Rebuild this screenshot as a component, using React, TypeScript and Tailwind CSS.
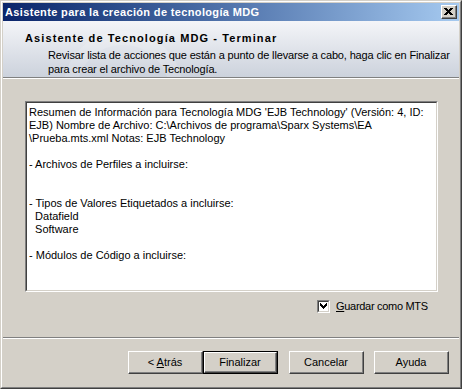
import React from "react";

const font = { fontFamily: '"Liberation Sans", Arial, sans-serif' };

function Btn({ label, def, ul }: { label: string; def?: boolean; ul?: string }) {
  const inner = (
    <div className="w-full h-full border-t border-l border-t-white border-l-white border-r border-b border-r-[#404040] border-b-[#404040]">
      <div className="w-full h-full border-r border-b border-r-[#808080] border-b-[#808080] flex items-center justify-center text-[11px] text-black">
        {ul ? (
          <span>
            {label.split(ul)[0]}
            <span className="underline">{ul}</span>
            {label.split(ul)[1]}
          </span>
        ) : (
          label
        )}
      </div>
    </div>
  );
  return def ? (
    <div className="w-[75px] h-[23px] border border-black bg-[#d4d0c8]">{inner}</div>
  ) : (
    <div className="w-[75px] h-[23px] bg-[#d4d0c8]">{inner}</div>
  );
}

export default function App() {
  const lines = [
    "Resumen de Información para Tecnología MDG 'EJB Technology' (Versión: 4, ID:",
    "EJB) Nombre de Archivo: C:\\Archivos de programa\\Sparx Systems\\EA",
    "\\Prueba.mts.xml Notas: EJB Technology",
    "",
    "- Archivos de Perfiles a incluirse:",
    "",
    "",
    "- Tipos de Valores Etiquetados a incluirse:",
    "  Datafield",
    "  Software",
    "",
    "- Módulos de Código a incluirse:",
  ];
  return (
    <div style={font} className="w-[462px] h-[389px] bg-[#d4d0c8] border-t border-l border-t-[#d4d0c8] border-l-[#d4d0c8] border-r border-b border-r-[#404040] border-b-[#404040]">
      <div className="w-full h-full flex flex-col border-t border-l border-t-white border-l-white border-r border-b border-r-[#808080] border-b-[#808080] p-px">
        {/* title bar */}
        <div className="h-[18px] flex items-center justify-between bg-gradient-to-r from-[#0a246a] to-[#a6caf0] pl-[2px] pr-[2px]">
          <span className="text-white font-bold text-[11px] leading-none whitespace-nowrap tracking-[0.35px]">
            Asistente para la creación de tecnología MDG
          </span>
          <div className="w-[16px] h-[14px] bg-[#d4d0c8] border-t border-l border-t-white border-l-white border-r border-b border-r-[#404040] border-b-[#404040]">
            <div className="w-full h-full border-r border-b border-r-[#808080] border-b-[#808080] flex items-center justify-center">
              <svg width="9" height="7" viewBox="0 0 9 7" shapeRendering="crispEdges">
                <path d="M0 0h3v1h-3zM6 0h3v1h-3zM1 1h3v1h-3zM5 1h3v1h-3zM2 2h5v1h-5zM3 3h3v1h-3zM2 4h5v1h-5zM1 5h3v1h-3zM5 5h3v1h-3zM0 6h3v1h-3zM6 6h3v1h-3z" fill="#000" />
              </svg>
            </div>
          </div>
        </div>
        {/* header */}
        <div className="relative h-[57px] bg-gradient-to-b from-[#f4f5f8] to-[#ccd2dc] border-b border-b-[#808080] overflow-hidden pl-[22px] pt-[10px]">
          <div className="absolute left-[60px] top-[10px] w-[120px] h-[120px] rounded-full border-[14px] border-white/15" />
          <div className="relative text-[11px] font-bold leading-[14px] text-black whitespace-nowrap tracking-[1.1px]">
            Asistente de Tecnología MDG - Terminar
          </div>
          <div className="relative pl-[23px] pt-[3px] text-[11px] leading-[14px] text-black whitespace-nowrap tracking-[-0.15px]">
            <div>Revisar lista de acciones que están a punto de llevarse a cabo, haga clic en Finalizar</div>
            <div>para crear el archivo de Tecnología.</div>
          </div>
        </div>
        <div className="h-px bg-white" />
        {/* body */}
        <div className="h-[258px] flex flex-col pl-[22px] pt-[22px]">
          <div className="w-[413px] h-[191px] border-t border-l border-t-[#808080] border-l-[#808080] border-r border-b border-r-white border-b-white">
            <div className="w-full h-full bg-white border-t border-l border-t-[#404040] border-l-[#404040] border-r border-b border-r-[#d4d0c8] border-b-[#d4d0c8] pl-[2px] pt-[3px] text-[11px] leading-[13px] text-black">
              {lines.map((l, i) => (
                <div key={i} className="h-[13px] whitespace-pre">
                  {l}
                </div>
              ))}
            </div>
          </div>
          <div className="flex items-center mt-[8px] ml-[292px]">
            <div className="w-[13px] h-[13px] border-t border-l border-t-[#808080] border-l-[#808080] border-r border-b border-r-white border-b-white">
              <div className="w-full h-full bg-white border-t border-l border-t-[#404040] border-l-[#404040] border-r border-b border-r-[#d4d0c8] border-b-[#d4d0c8] flex items-center justify-center">
                <svg width="7" height="7" viewBox="0 0 7 7" shapeRendering="crispEdges">
                  <path d="M6 0h1v3h-1zM5 1h1v3h-1zM4 2h1v3h-1zM3 3h1v3h-1zM2 2h1v3h-1zM1 1h1v3h-1zM0 0h1v3h-1z" fill="#000" />
                </svg>
              </div>
            </div>
            <span className="ml-[6px] text-[11px] leading-[13px] text-black whitespace-nowrap tracking-[-0.3px]">
              <span className="underline">G</span>uardar como MTS
            </span>
          </div>
        </div>
        {/* separator */}
        <div className="h-px bg-[#808080]" />
        <div className="h-px bg-white" />
        {/* buttons */}
        <div className="flex-1 flex pt-[12px] pl-[125px]">
          <Btn label="< Atrás" ul="A" />
          <Btn label="Finalizar" def />
          <div className="ml-[11px]">
            <Btn label="Cancelar" />
          </div>
          <div className="ml-[10px]">
            <Btn label="Ayuda" />
          </div>
        </div>
      </div>
    </div>
  );
}
